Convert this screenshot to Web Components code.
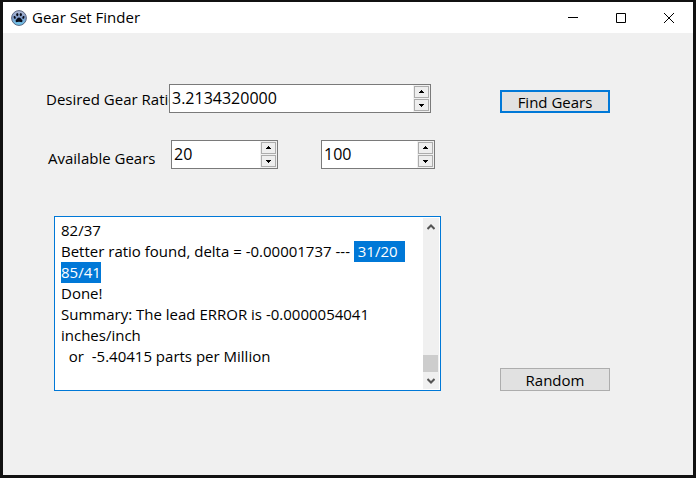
<!DOCTYPE html>
<html lang="en">
<head>
<meta charset="utf-8">
<title>Gear Set Finder</title>
<style>
body { margin: 0; font: 15px/21px "Open Sans", "Noto Sans", sans-serif; color: #000; }
</style>
</head>
<body>
<gear-app></gear-app>
<script>
class BaseElement extends HTMLElement {
  render(html) {
    this.attachShadow({ mode: "open" }).innerHTML =
      `<style>*{box-sizing:border-box}button,input,textarea{font:inherit;color:inherit;margin:0;border-radius:0;outline:none}</style>` + html;
  }
}

customElements.define("app-window", class extends BaseElement {
  connectedCallback() {
    this.render(`
<style>
:host { display: flex; flex-direction: column; box-sizing: border-box; min-height: 100vh; border: 3px solid #111; border-top-width: 2px; background: #f0f0f0; }
header { display: flex; align-items: center; height: 31px; background: #fff; padding-left: 8px; }
h1 { flex: 1; margin: 0 0 0 5px; font: inherit; white-space: nowrap; }
header button { width: 48px; height: 31px; padding: 0; border: 0; background: none; display: grid; place-items: center; }
svg { display: block; }
main { flex: 1; }
</style>
<header>
<svg width="16" height="16" viewBox="0 0 16 16" aria-hidden="true">
<defs><linearGradient id="g" x1="0" y1="0" x2="0" y2="1"><stop offset="0" stop-color="#b4bcd6"/><stop offset=".5" stop-color="#7d9ac8"/><stop offset="1" stop-color="#6fd0f5"/></linearGradient></defs>
<circle cx="8" cy="8" r="7.4" fill="url(#g)" stroke="#5a6580"/>
<g fill="#080c18"><ellipse cx="6.3" cy="4.6" rx="1.1" ry="1.7"/><ellipse cx="9.8" cy="4.6" rx="1.1" ry="1.7"/><ellipse cx="3.7" cy="7.4" rx="1" ry="1.5" transform="rotate(-20 3.7 7.4)"/><ellipse cx="12.4" cy="7.4" rx="1" ry="1.5" transform="rotate(20 12.4 7.4)"/><path d="M8 7.5C6.600 7.500 6.200 9 5.100 9.800C4 11 4.800 12.500 6.200 12.100Q8 11.600 9.800 12.100C11.300 12.500 12.100 11 11 9.800C9.900 9 9.500 7.500 8 7.500Z"/></g>
</svg>
<h1><slot name="title"></slot></h1>
<button type="button" aria-label="Minimize"><svg width="10" height="11" viewBox="0 0 10 11"><path d="M0 5.5H10" stroke="#000"/></svg></button>
<button type="button" aria-label="Maximize"><svg width="10" height="10" viewBox="0 0 10 10"><path d="M.5 .5H9.5V9.5H.5Z" fill="none" stroke="#000"/></svg></button>
<button type="button" aria-label="Close"><svg width="10" height="10" viewBox="0 0 10 10"><path d="M0 0L10 10M10 0L0 10" stroke="#000"/></svg></button>
</header>
<main><slot></slot></main>`);
  }
});

customElements.define("number-box", class extends BaseElement {
  connectedCallback() {
    this.render(`
<style>
:host { display: flex; box-sizing: border-box; min-width: 0; height: 29px; border: 1px solid #7a7a7a; background: #fff; }
input { flex: 1; min-width: 0; width: 0; padding: 0 2px; border: 0; background: none; appearance: textfield; font-size: 16px; }
input::-webkit-inner-spin-button { appearance: none; margin: 0; }
div { display: flex; flex-direction: column; gap: 1px; padding: 1px; background: #f0f0f0; }
button { width: 15px; height: 12px; padding: 0; border: 1px solid #acacac; background: #eee; display: grid; place-items: center; }
svg { display: block; }
</style>
<input type="number" step="any" aria-label="${this.getAttribute("label")}" value="${this.getAttribute("value")}">
<div>
<button type="button" aria-label="Increase"><svg width="5" height="4" viewBox="0 0 5 4"><path d="M2 0H3V1H4V2H5V3H0V2H1V1H2Z"/></svg></button>
<button type="button" aria-label="Decrease"><svg width="5" height="4" viewBox="0 0 5 4"><path d="M0 1H5V2H4V3H3V4H2V3H1V2H0Z"/></svg></button>
</div>`);
    const input = this.shadowRoot.querySelector("input");
    const [up, down] = this.shadowRoot.querySelectorAll("button");
    const step = d => { input.value = Number(input.value) + d; };
    up.onclick = () => step(1);
    down.onclick = () => step(-1);
  }
});

customElements.define("push-button", class extends BaseElement {
  connectedCallback() {
    this.render(`
<style>
:host { display: block; }
button { display: block; width: 100%; height: 23px; padding: 2px 0 0; border: 1px solid #adadad; background: #e1e1e1; line-height: 19px; }
:host([default]) button { border: 2px solid #0078d7; line-height: 17px; }
</style>
<button type="button"><slot></slot></button>`);
  }
});

customElements.define("log-box", class extends BaseElement {
  connectedCallback() {
    this.render(`
<style>
:host { display: flex; box-sizing: border-box; height: 175px; border: 1px solid #0078d7; background: #fff; padding: 1px; }
textarea { flex: 1; min-width: 0; padding: 2px 5px 0; border: 0; resize: none; overflow: hidden; background: none; white-space: pre-wrap; }
textarea::selection { background: #0078d7; color: #fff; }
.bar { display: flex; flex-direction: column; width: 16px; background: #f0f0f0; }
.bar button { height: 17px; padding: 0; border: 0; background: none; display: grid; place-items: center; }
.track { flex: 1; display: flex; flex-direction: column; justify-content: flex-end; }
.thumb { height: 17px; width: 15px; background: #cdcdcd; }
svg { display: block; }
</style>
<textarea aria-label="Results" spellcheck="false"></textarea>
<div class="bar">
<button type="button" aria-label="Scroll up"><svg width="8" height="6" viewBox="0 0 8 6"><path d="M.5 5L4 1.5L7.5 5" fill="none" stroke="#555" stroke-width="2"/></svg></button>
<div class="track"><div class="thumb"></div></div>
<button type="button" aria-label="Scroll down"><svg width="8" height="6" viewBox="0 0 8 6"><path d="M.5 1L4 4.500L7.500 1" fill="none" stroke="#555" stroke-width="2"/></svg></button>
</div>`);
    const area = this.shadowRoot.querySelector("textarea");
    const pair = " 31/20 85/41";
    area.value = "82/37\nBetter ratio found, delta = -0.00001737 --- " + pair +
      "\nDone!\nSummary: The lead ERROR is -0.0000054041 inches/inch\n  or  -5.40415 parts per Million";
    const start = area.value.indexOf(pair);
    area.focus({ preventScroll: true });
    area.setSelectionRange(start, start + pair.length);
    area.scrollTop = 0;
  }
});

customElements.define("gear-app", class extends BaseElement {
  connectedCallback() {
    this.render(`
<style>
:host { display: block; }
.form { display: grid; grid-template-columns: minmax(0, 1fr) 110px; column-gap: 59px; align-items: end; padding: 51px 83px 24px 43px; }
.row { display: flex; }
.name { flex: none; width: 123px; height: 29px; padding-top: 5px; white-space: nowrap; }
.ratio { padding-right: 10px; }
.ratio number-box { flex: 1; position: relative; }
.range { margin-top: 27px; padding: 0 6px 0 2px; }
.range .name { padding-top: 8px; }
.range number-box:nth-of-type(1) { flex: 107; margin-right: 43px; }
.range number-box:nth-of-type(2) { flex: 114; }
log-box { margin: 47px 0 0 8px; }
.find { grid-column: 2; }
.range, log-box { grid-column: 1; }
</style>
<app-window>
<span slot="title">Gear Set Finder</span>
<div class="form">
<div class="row ratio"><span class="name">Desired Gear Ratio</span><number-box label="Desired Gear Ratio" value="3.2134320000"></number-box></div>
<push-button class="find" default>Find Gears</push-button>
<div class="row range"><span class="name">Available Gears</span><number-box label="Available Gears minimum" value="20"></number-box><number-box label="Available Gears maximum" value="100"></number-box></div>
<log-box></log-box>
<push-button>Random</push-button>
</div>
</app-window>`);
  }
});
</script>
</body>
</html>
